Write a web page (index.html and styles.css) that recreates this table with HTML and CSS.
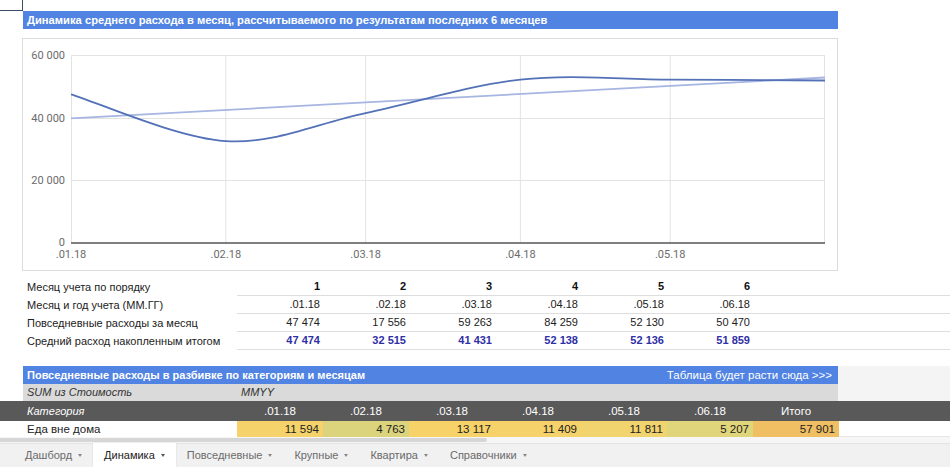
FILE: index.html
```html
<!DOCTYPE html>
<html lang="ru">
<head>
<meta charset="utf-8">
<title>Динамика</title>
<link rel="stylesheet" href="styles.css">
</head>
<body>
<div class="page">
  <div class="corner"></div>
  <div class="indent">
    <div class="title-bar">Динамика среднего расхода в месяц, рассчитываемого по результатам последних 6 месяцев</div>
    <div class="chart-box">
      <svg class="chart" width="814" height="231" viewBox="23 39 814 231" xmlns="http://www.w3.org/2000/svg">
        <g stroke="#e3e3e3" stroke-width="1" fill="none">
          <line x1="71" y1="55.5" x2="825" y2="55.5"/>
          <line x1="71" y1="118.5" x2="825" y2="118.5"/>
          <line x1="71" y1="180.5" x2="825" y2="180.5"/>
          <line x1="71.5" y1="55" x2="71.5" y2="243"/>
          <line x1="225.8" y1="55" x2="225.8" y2="243"/>
          <line x1="365.6" y1="55" x2="365.6" y2="243"/>
          <line x1="520.4" y1="55" x2="520.4" y2="243"/>
          <line x1="670.2" y1="55" x2="670.2" y2="243"/>
          <line x1="824.5" y1="55" x2="824.5" y2="243"/>
        </g>
        <line x1="71" y1="243" x2="825" y2="243" stroke="#555" stroke-width="1.5"/>
        <path d="M71 118.4 L825 77.5" stroke="#a6b5e2" stroke-width="1.8" fill="none"/>
        <path d="M71 94.3 C96.8 102.1 176.7 137.95 225.8 141.1 C274.9 144.25 316.5 123.45 365.6 113.2 C414.7 102.95 469.6 85.2 520.4 79.6 C571.2 74 619.4 79.45 670.2 79.6 C721 79.75 799.2 80.35 825 80.5" stroke="#5371b7" stroke-width="1.8" fill="none"/>
        <g class="ylab" text-anchor="end">
          <text x="65" y="59">60 000</text>
          <text x="65" y="122">40 000</text>
          <text x="65" y="184">20 000</text>
          <text x="65" y="246">0</text>
        </g>
        <g class="xlab" text-anchor="middle">
          <text x="71" y="258">.01.18</text>
          <text x="225.8" y="258">.02.18</text>
          <text x="365.6" y="258">.03.18</text>
          <text x="520.4" y="258">.04.18</text>
          <text x="670.2" y="258">.05.18</text>
        </g>
      </svg>
    </div>
  </div>

  <div class="data-table">
    <div class="row">
      <div class="lbl">Месяц учета по порядку</div>
      <div class="num bold">1</div><div class="num bold">2</div><div class="num bold">3</div><div class="num bold">4</div><div class="num bold">5</div><div class="num bold">6</div><div class="filler"></div>
    </div>
    <div class="row">
      <div class="lbl">Месяц и год учета (ММ.ГГ)</div>
      <div class="num">.01.18</div><div class="num">.02.18</div><div class="num">.03.18</div><div class="num">.04.18</div><div class="num">.05.18</div><div class="num">.06.18</div><div class="filler"></div>
    </div>
    <div class="row">
      <div class="lbl">Повседневные расходы за месяц</div>
      <div class="num">47 474</div><div class="num">17 556</div><div class="num">59 263</div><div class="num">84 259</div><div class="num">52 130</div><div class="num">50 470</div><div class="filler"></div>
    </div>
    <div class="row">
      <div class="lbl">Средний расход накопленным итогом</div>
      <div class="num blue">47 474</div><div class="num blue">32 515</div><div class="num blue">41 431</div><div class="num blue">52 138</div><div class="num blue">52 136</div><div class="num blue">51 859</div><div class="filler"></div>
    </div>
  </div>

  <div class="pivot">
    <div class="prow ptitle">
      <div class="ptitle-bar">
        <span class="ptitle-left">Повседневные расходы в разбивке по категориям и месяцам</span>
        <span class="ptitle-right">Таблица будет расти сюда &gt;&gt;&gt;</span>
      </div>
      <div class="pfill"></div>
    </div>
    <div class="prow psum">
      <div class="psum-bar">
        <span class="pc-lbl">SUM из Стоимость</span>
        <span class="pc-mmyy">MMYY</span>
      </div>
      <div class="pfill"></div>
    </div>
    <div class="prow phead">
      <div class="pc-lbl">Категория</div>
      <div class="pc-h">.01.18</div><div class="pc-h">.02.18</div><div class="pc-h">.03.18</div><div class="pc-h">.04.18</div><div class="pc-h">.05.18</div><div class="pc-h">.06.18</div><div class="pc-h">Итого</div>
      <div></div>
    </div>
    <div class="prow pdata">
      <div class="pc-lbl">Еда вне дома</div>
      <div class="pc-v c-mid">11 594</div>
      <div class="pc-v c-low">4 763</div>
      <div class="pc-v c-high">13 117</div>
      <div class="pc-v c-mid">11 409</div>
      <div class="pc-v c-mid2">11 811</div>
      <div class="pc-v c-low2">5 207</div>
      <div class="pc-v c-total">57 901</div>
      <div class="pc-empty"></div>
    </div>
  </div>

  <div class="hscroll"><div class="thumb"></div></div>

  <div class="tabs">
    <div class="tab">Дашборд <span class="caret"></span></div>
    <div class="tab active">Динамика <span class="caret"></span></div>
    <div class="tab">Повседневные <span class="caret"></span></div>
    <div class="tab">Крупные <span class="caret"></span></div>
    <div class="tab">Квартира <span class="caret"></span></div>
    <div class="tab">Справочники <span class="caret"></span></div>
  </div>
</div>
</body>
</html>
```
FILE: styles.css
```css
html, body {
  margin: 0;
  padding: 0;
  background: #ffffff;
}
body {
  font-family: "Liberation Sans", Arial, sans-serif;
  font-size: 11px;
  color: #222;
}
.page {
  width: 950px;
  height: 467px;
  overflow: hidden;
  display: flex;
  flex-direction: column;
}
.corner {
  width: 22px;
  height: 10px;
  border-right: 1px solid #3d4a66;
  border-bottom: 1px solid #3d4a66;
  flex: none;
}
.indent {
  padding-left: 23px;
  width: 815px;
}
.title-bar {
  height: 18px;
  line-height: 18px;
  background: #5083e2;
  color: #fff;
  font-weight: bold;
  font-size: 11.2px;
  padding-left: 4px;
  white-space: nowrap;
}
.chart-box {
  margin-top: 9px;
  margin-left: -1px;
  width: 814px;
  height: 231px;
  border: 1px solid #dcdcdc;
}
.chart {
  display: block;
}
.chart text {
  font-family: Roboto, "Liberation Sans", sans-serif;
  font-size: 11px;
  fill: #6b6b6b;
}

/* data table */
.data-table {
  margin-top: 7px;
  display: flex;
  flex-direction: column;
}
.row {
  display: grid;
  grid-template-columns: 237px repeat(6, 86px) 1fr;
  height: 18px;
}
.row > div {
  line-height: 18px;
  box-sizing: border-box;
  white-space: nowrap;
}
.lbl {
  padding-left: 27px;
  color: #222;
}
.num, .filler {
  border-bottom: 1px solid #dedede;
}
.num {
  text-align: right;
  padding-right: 3px;
  line-height: 17px !important;
  color: #222;
}
.bold {
  font-weight: bold;
  color: #111;
}
.blue {
  font-weight: bold;
  color: #2f2fa6;
}

/* pivot */
.pivot {
  margin-top: 16px;
  display: flex;
  flex-direction: column;
}
.prow {
  display: flex;
}
.ptitle {
  height: 18px;
}
.ptitle-bar {
  margin-left: 23px;
  width: 815px;
  background: #5083e2;
  color: #fff;
  display: flex;
  justify-content: space-between;
  align-items: center;
  padding: 0 6px 0 4px;
  box-sizing: border-box;
  line-height: 18px;
}
.ptitle-left {
  font-weight: bold;
}
.ptitle-right {
  font-size: 11.5px;
}
.pfill {
  flex: 1;
  background: #f4f4f4;
}
.psum {
  height: 17px;
}
.psum-bar {
  margin-left: 23px;
  width: 815px;
  background: #dadada;
  display: flex;
  line-height: 17px;
  font-style: italic;
  color: #333;
}
.psum-bar .pc-lbl {
  width: 214px;
  padding-left: 4px;
  box-sizing: border-box;
}
.pc-mmyy {
  padding-left: 4px;
}
.phead {
  height: 20px;
  background: #595959;
  color: #fff;
  display: grid;
  grid-template-columns: 237px repeat(7, 86px) 1fr;
  line-height: 20px;
}
.phead .pc-lbl {
  padding-left: 27px;
  font-style: italic;
}
.pc-h {
  text-align: center;
  font-size: 11.5px;
}
.pdata {
  height: 16px;
  display: grid;
  grid-template-columns: 237px repeat(7, 86px) 1fr;
  line-height: 16px;
}
.pdata .pc-lbl {
  padding-left: 27px;
  font-size: 11.5px;
}
.pc-v {
  text-align: right;
  padding-right: 4px;
  font-size: 11.5px;
  color: #222;
}
.pc-empty {
  border-bottom: 1px solid #e6e6e6;
}
.c-mid { background: #f5d36a; }
.c-mid2 { background: #f2d46e; }
.c-high { background: #f7d268; }
.c-low { background: #dbd47c; }
.c-low2 { background: #e0d57a; }
.c-total { background: #f0bf63; }

/* scroll */
.hscroll {
  height: 6px;
  background: #f6f6f6;
  display: flex;
  align-items: center;
}
.thumb {
  width: 487px;
  height: 4px;
  border-radius: 0 3px 3px 0;
  background: #d6d6d6;
}

/* tabs */
.tabs {
  height: 24px;
  background: #f1f1f1;
  display: flex;
  padding-left: 14px;
  box-shadow: inset 0 1px 1px rgba(0,0,0,0.06);
}
.tab {
  display: flex;
  align-items: center;
  padding: 0 11px 0 11px;
  color: #6a6a6a;
  font-size: 11px;
  white-space: nowrap;
}
.tab.active {
  background: #ffffff;
  color: #222;
  box-shadow: 0 0 2px rgba(0,0,0,0.1);
}
.caret {
  margin-left: 6px;
  width: 0;
  height: 0;
  border-left: 2.5px solid transparent;
  border-right: 2.5px solid transparent;
  border-top: 3px solid #888;
}
.tab.active .caret {
  border-top-color: #555;
}
```
